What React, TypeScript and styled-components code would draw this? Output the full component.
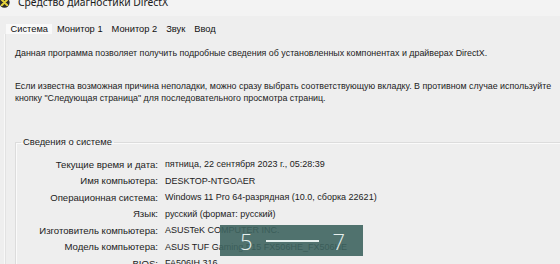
import React from "react";
import styled, { createGlobalStyle } from "styled-components";

const Global = createGlobalStyle`
  html, body { margin: 0; padding: 0; background: #eeeeee; }
  body { font-family: "Liberation Sans", Arial, sans-serif; }
`;

const Window = styled.div`
  position: relative;
  width: 560px;
  height: 264px;
  overflow: hidden;
  background: #eeeeee;
  display: flex;
  flex-direction: column;
`;

const TitleBar = styled.div`
  height: 16px;
  flex: none;
  background: #f3f3f3;
  display: flex;
  align-items: flex-start;
  gap: 8px;
`;

const AppIcon = styled.svg`
  width: 11px;
  height: 11px;
  margin-top: -3px;
  margin-left: -1px;
  flex: none;
`;

const Title = styled.div`
  font-family: "Noto Sans", "Open Sans", sans-serif;
  font-size: 10.3px;
  line-height: 12px;
  margin-top: -4px;
  color: #1a1a1a;
  white-space: nowrap;
`;

const TabRow = styled.div`
  display: flex;
  margin-top: 8px;
  padding-left: 6px;
  height: 17px;
  align-items: stretch;
`;

const Tab = styled.div<{ $active?: boolean }>`
  font-family: "Liberation Sans", Arial, sans-serif;
  font-size: 9.3px;
  display: flex;
  align-items: center;
  padding: 0 4.5px;
  background: ${(p) => (p.$active ? "#f9f9f9" : "transparent")};
  color: #111;
  white-space: nowrap;
`;

const Panel = styled.div`
  flex: 1;
  margin-left: 4px;
  border-left: 1px solid #f8f8f8;
  box-shadow: inset 1px 0 0 #e2e2e2;
  padding: 13px 0 0 10px;
  font-size: 8.9px;
  color: #222;
`;

const Para = styled.p<{ $gap?: number }>`
  margin: 0;
  margin-top: ${(p) => p.$gap ?? 0}px;
  line-height: 12px;
  white-space: nowrap;
`;

const Group = styled.fieldset`
  margin: 32px 0 0 0;
  padding: 8px 0 0 0;
  border: none;
  border-top: 1px solid #dcdcdc;
  border-left: 1px solid #dcdcdc;
  box-shadow: inset 1px 1px 0 #fafafa;
  min-width: 0;
`;

const Legend = styled.legend`
  margin-left: 5px;
  padding: 0 2px;
  font-size: 9.4px;
  line-height: 12px;
  color: #222;
`;

const InfoGrid = styled.div`
  display: grid;
  grid-template-columns: 142px 1fr;
  column-gap: 7px;
  grid-auto-rows: 16.5px;
  align-items: center;
  white-space: nowrap;
`;

const Label = styled.div`
  text-align: right;
  font-size: 9.6px;
`;

const Value = styled.div`
  font-size: 9px;
`;

const Badge = styled.div`
  position: absolute;
  left: 220px;
  top: 225px;
  width: 143px;
  height: 31px;
  background: rgba(62, 100, 95, 0.9);
  display: flex;
  align-items: center;
  padding-left: 20px;
  box-sizing: border-box;
  color: #e6f0ee;
  font-family: "Open Sans", "Noto Sans", sans-serif;
  font-weight: 300;
  font-size: 22px;
`;

const Dash = styled.span`
  width: 53px;
  height: 2px;
  background: #e6f0ee;
  margin: 1px 14px 0 13px;
`;

const rows: [string, string][] = [
  ["Текущие время и дата:", "пятница, 22 сентября 2023 г., 05:28:39"],
  ["Имя компьютера:", "DESKTOP-NTGOAER"],
  ["Операционная система:", "Windows 11 Pro 64-разрядная (10.0, сборка 22621)"],
  ["Язык:", "русский (формат: русский)"],
  ["Изготовитель компьютера:", "ASUSTeK COMPUTER INC."],
  ["Модель компьютера:", "ASUS TUF Gaming F15 FX506HE_FX506HE"],
  ["BIOS:", "FA506IH.316"],
];

export default function App() {
  return (
    <>
      <Global />
      <Window>
        <TitleBar>
          <AppIcon viewBox="0 0 12 12">
            <circle cx="6" cy="6" r="5.6" fill="#2b2b2b" />
            <path d="M3 3 L9 9 M9 3 L3 9" stroke="#e4d23a" strokeWidth="2.2" strokeLinecap="round" />
          </AppIcon>
          <Title>Средство диагностики DirectX</Title>
        </TitleBar>
        <TabRow>
          <Tab $active>Система</Tab>
          <Tab>Монитор 1</Tab>
          <Tab>Монитор 2</Tab>
          <Tab>Звук</Tab>
          <Tab>Ввод</Tab>
        </TabRow>
        <Panel>
          <Para>
            Данная программа позволяет получить подробные сведения об установленных компонентах и драйверах DirectX.
          </Para>
          <Para $gap={21}>
            Если известна возможная причина неполадки, можно сразу выбрать соответствующую вкладку. В противном случае используйте
          </Para>
          <Para>кнопку "Следующая страница" для последовательного просмотра страниц.</Para>
          <Group>
            <Legend>Сведения о системе</Legend>
            <InfoGrid>
              {rows.map(([l, v]) => (
                <React.Fragment key={l}>
                  <Label>{l}</Label>
                  <Value>{v}</Value>
                </React.Fragment>
              ))}
            </InfoGrid>
          </Group>
        </Panel>
        <Badge>
          <span>5</span>
          <Dash />
          <span>7</span>
        </Badge>
      </Window>
    </>
  );
}
